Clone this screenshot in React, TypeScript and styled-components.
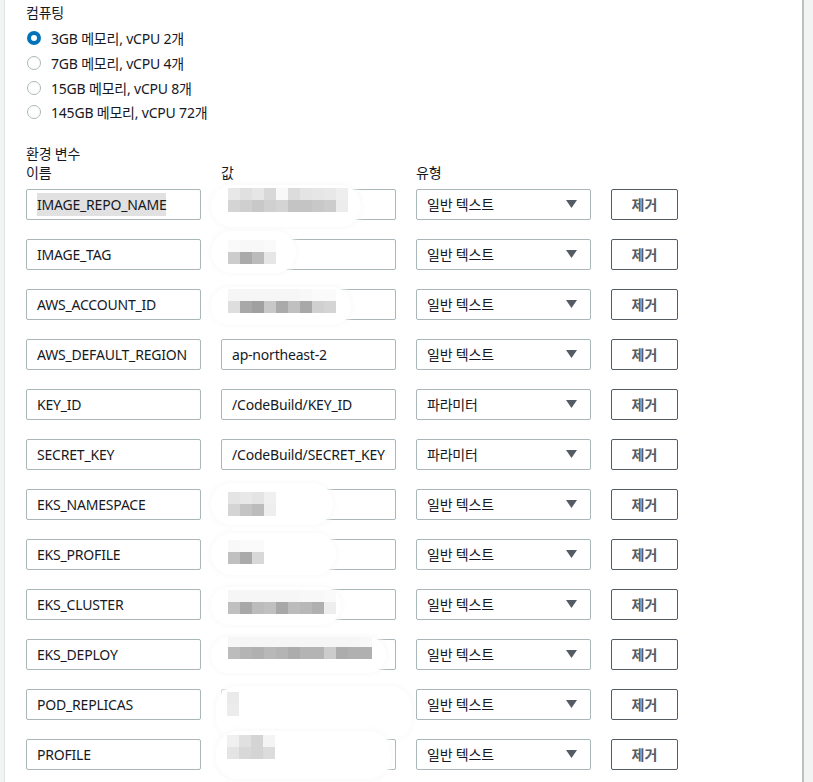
import React from "react";
import styled, { createGlobalStyle } from "styled-components";

const GlobalStyle = createGlobalStyle`
  html, body { margin: 0; padding: 0; }
  body {
    background: #f2f3f3;
    font-family: "Noto Sans", "Noto Sans CJK KR", sans-serif;
    color: #16191f;
    font-size: 14px;
    letter-spacing: -0.2px;
  }
`;

const Panel = styled.div`
  margin-left: 4px;
  width: 800px;
  min-height: 782px;
  box-sizing: border-box;
  background: #ffffff;
  border-left: 1px solid #dfe3e3;
  border-right: 2px solid #b9c1c2;
  padding: 3px 0 0 21px;
`;

const Label = styled.div<{ $mt?: number }>`
  font-size: 14px;
  line-height: 19px;
  margin-top: ${(p) => p.$mt ?? 0}px;
  color: #16191f;
`;

const RadioList = styled.div`
  display: flex;
  flex-direction: column;
  margin-top: 4px;
`;

const RadioRow = styled.label`
  display: flex;
  align-items: center;
  height: 24.7px;
  gap: 10px;
  font-size: 14px;
`;

const RadioDot = styled.span<{ $checked?: boolean }>`
  width: 14px;
  height: 14px;
  box-sizing: border-box;
  border-radius: 50%;
  flex: none;
  margin-left: 1px;
  border: ${(p) => (p.$checked ? "4px solid #0073bb" : "1.5px solid #aab7b8")};
  background: #fff;
`;

const Grid = styled.div`
  display: grid;
  grid-template-columns: 175px 175px 175px 67px;
  column-gap: 20px;
`;

const HeaderGrid = styled(Grid)`
  margin-bottom: 7px;
`;

const Rows = styled.div`
  display: flex;
  flex-direction: column;
  gap: 19px;
`;

const Field = styled.div`
  position: relative;
  height: 31px;
  box-sizing: border-box;
  border: 1px solid #aab7b8;
  border-radius: 2px;
  background: #fff;
  display: flex;
  align-items: center;
  padding: 0 10px;
  font-size: 14px;
  white-space: nowrap;
  overflow: hidden;
`;

const Selected = styled.span`
  background: #e1e1e1;
  padding: 2px 0;
`;

const ValueCell = styled.div`
  position: relative;
`;

const SelectBox = styled(Field)`
  justify-content: space-between;
  padding-right: 13px;
`;

const Caret = styled.svg`
  width: 11px;
  height: 8px;
  flex: none;
`;

const RemoveButton = styled.button`
  height: 31px;
  box-sizing: border-box;
  border: 1px solid #545b64;
  border-radius: 2px;
  background: #fff;
  color: #545b64;
  font-family: "Noto Sans", "Noto Sans CJK KR", sans-serif;
  font-weight: 700;
  font-size: 14px;
  padding: 0;
`;

const Blob = styled.div`
  position: absolute;
  background: #ffffff;
  border-radius: 22px;
  box-shadow: 0 0 4px 2px rgba(250, 250, 250, 0.9);
  overflow: hidden;
`;

const Pixels = styled.div`
  position: absolute;
  display: flex;
  flex-direction: column;
`;

const PixelLine = styled.div`
  display: flex;
`;

const Pixel = styled.span<{ $c: string }>`
  width: 12px;
  height: 12px;
  background: ${(p) => p.$c};
`;

type Blur = {
  left: number;
  top: number;
  width: number;
  height: number;
  px: number;
  py: number;
  lines: string[][];
};

type Row = {
  name: string;
  value?: string;
  type: string;
  highlight?: boolean;
  blur?: Blur;
};

const g = (n: number) => `rgb(${n},${n},${n})`;

const rows: Row[] = [
  {
    name: "IMAGE_REPO_NAME",
    type: "일반 텍스트",
    highlight: true,
    blur: {
      left: -10, top: -4, width: 150, height: 42, px: 17, py: 3,
      lines: [
        [232, 224, 230, 216, 248, 220, 228, 230, 232, 238].map(g),
        [212, 207, 200, 208, 212, 196, 196, 200, 204, 236].map(g),
      ],
    },
  },
  {
    name: "IMAGE_TAG",
    type: "일반 텍스트",
    blur: {
      left: -10, top: -8, width: 85, height: 42, px: 17, py: 9,
      lines: [
        [250, 248, 248, 250].map(g),
        [204, 170, 187, 230].map(g),
      ],
    },
  },
  {
    name: "AWS_ACCOUNT_ID",
    type: "일반 텍스트",
    blur: {
      left: -10, top: -2, width: 140, height: 38, px: 17, py: 2,
      lines: [
        [246, 246, 246, 246, 246, 246, 248, 250, 250].map(g),
        [222, 168, 160, 200, 170, 192, 168, 208, 212].map(g),
      ],
    },
  },
  { name: "AWS_DEFAULT_REGION", value: "ap-northeast-2", type: "일반 텍스트" },
  { name: "KEY_ID", value: "/CodeBuild/KEY_ID", type: "파라미터" },
  { name: "SECRET_KEY", value: "/CodeBuild/SECRET_KEY", type: "파라미터" },
  {
    name: "EKS_NAMESPACE",
    type: "일반 텍스트",
    blur: {
      left: -10, top: -6, width: 122, height: 42, px: 17, py: 9,
      lines: [
        [228, 232, 228, 240].map(g),
        [212, 196, 188, 238].map(g),
      ],
    },
  },
  {
    name: "EKS_PROFILE",
    type: "일반 텍스트",
    blur: {
      left: -10, top: -6, width: 125, height: 42, px: 17, py: 7,
      lines: [
        [248, 250, 250].map(g),
        [192, 170, 216].map(g),
      ],
    },
  },
  {
    name: "EKS_CLUSTER",
    type: "일반 텍스트",
    blur: {
      left: -10, top: -2, width: 130, height: 38, px: 17, py: 3,
      lines: [
        [246, 246, 246, 246, 246, 246, 248, 248, 250].map(g),
        [192, 168, 188, 192, 168, 188, 184, 176, 238].map(g),
      ],
    },
  },
  {
    name: "EKS_DEPLOY",
    type: "일반 텍스트",
    blur: {
      left: -10, top: -2, width: 175, height: 36, px: 17, py: -2,
      lines: [
        [246, 246, 246, 246, 246, 246, 246, 246, 246, 246, 246, 248].map(g),
        [188, 180, 176, 184, 180, 172, 180, 180, 204, 172, 176, 176].map(g),
      ],
    },
  },
  {
    name: "POD_REPLICAS",
    type: "일반 텍스트",
    blur: {
      left: -5, top: -3, width: 196, height: 54, px: 11, py: 6,
      lines: [
        [234].map(g),
        [236].map(g),
      ],
    },
  },
  {
    name: "PROFILE",
    type: "일반 텍스트",
    blur: {
      left: -5, top: -8, width: 175, height: 48, px: 11, py: 4,
      lines: [
        [240, 224, 212, 244].map(g),
        [228, 216, 212, 220].map(g),
      ],
    },
  },
];

const options = [
  { label: "3GB 메모리, vCPU 2개", checked: true },
  { label: "7GB 메모리, vCPU 4개" },
  { label: "15GB 메모리, vCPU 8개" },
  { label: "145GB 메모리, vCPU 72개" },
];

function BlurOverlay({ b }: { b: Blur }) {
  return (
    <Blob style={{ left: b.left, top: b.top, width: b.width, height: b.height }}>
      <Pixels style={{ left: b.px, top: b.py }}>
        {b.lines.map((line, i) => (
          <PixelLine key={i}>
            {line.map((c, j) => (
              <Pixel key={j} $c={c} />
            ))}
          </PixelLine>
        ))}
      </Pixels>
    </Blob>
  );
}

export default function App() {
  return (
    <>
      <GlobalStyle />
      <Panel>
        <Label>컴퓨팅</Label>
        <RadioList>
          {options.map((o) => (
            <RadioRow key={o.label}>
              <RadioDot $checked={o.checked} />
              <span>{o.label}</span>
            </RadioRow>
          ))}
        </RadioList>
        <Label $mt={19}>환경 변수</Label>
        <HeaderGrid>
          <Label>이름</Label>
          <Label>값</Label>
          <Label>유형</Label>
          <span />
        </HeaderGrid>
        <Rows>
          {rows.map((r) => (
            <Grid key={r.name}>
              <Field>{r.highlight ? <Selected>{r.name}</Selected> : r.name}</Field>
              <ValueCell>
                <Field>{r.value ?? ""}</Field>
                {r.blur && <BlurOverlay b={r.blur} />}
              </ValueCell>
              <SelectBox>
                <span>{r.type}</span>
                <Caret viewBox="0 0 11 8">
                  <path d="M0 0 H11 L5.5 8 Z" fill="#545b64" />
                </Caret>
              </SelectBox>
              <RemoveButton>제거</RemoveButton>
            </Grid>
          ))}
        </Rows>
      </Panel>
    </>
  );
}
